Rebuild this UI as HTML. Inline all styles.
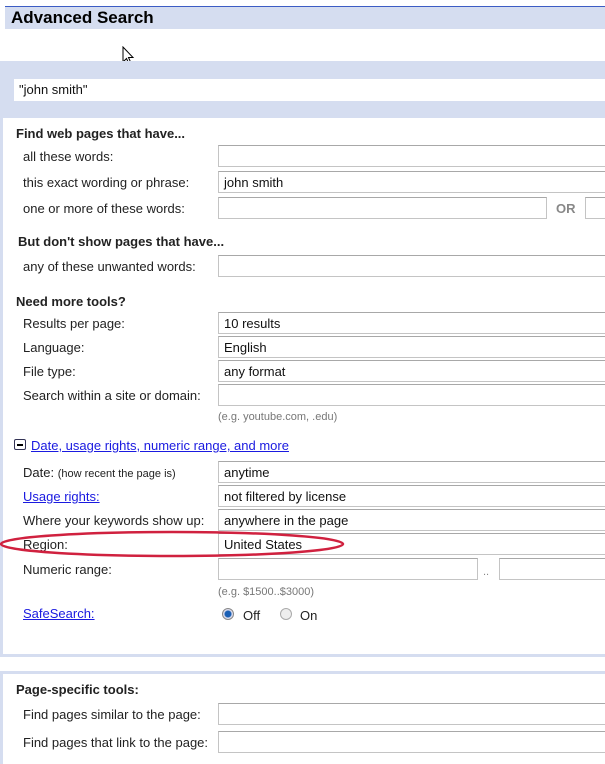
<!DOCTYPE html>
<html><head><style>
body{margin:0;width:605px;height:764px;overflow:hidden;background:#fff;font-family:"Liberation Sans",Arial,sans-serif;font-size:13px;color:#222;position:relative}
div,span{position:absolute}
.b{background:#d5ddf0}
.l{left:23px;white-space:nowrap}
.h{left:16px;font-weight:bold;white-space:nowrap}
.i{left:218px;width:400px;height:20px;border:1px solid #c4c4c4;border-top-color:#a8a8a8;background:#fff;box-sizing:content-box}
.i span{position:absolute;left:5px;top:3px;white-space:nowrap;color:#111}
.a{color:#1a1ae0;text-decoration:underline}
.g{color:#777;font-size:11px}
</style></head><body>
<div style="left:5px;top:6px;width:600px;height:1px;background:#3c5cc4"></div>
<div class="b" style="left:5px;top:7px;width:600px;height:22px"></div>
<div style="left:11px;top:8px;font-size:17px;font-weight:bold;color:#000">Advanced Search</div>
<svg style="position:absolute;left:122px;top:46px" width="14" height="20" viewBox="0 0 14 20"><path d="M1 1 L1 16 L4.5 12.5 L7 18 L9 17 L6.5 11.5 L11 11.5 Z" fill="#fff" stroke="#000" stroke-width="1"/></svg>
<div class="b" style="left:0;top:61px;width:605px;height:58px"></div>
<div class="b" style="left:0;top:61px;width:3px;height:596px"></div>
<div style="left:14px;top:79px;width:591px;height:22px;background:#fff"></div>
<div style="left:19px;top:82px;color:#111">"john smith"</div>
<div style="left:3px;top:118px;width:602px;height:536px;background:#fff"></div>
<div class="h" style="top:126px">Find web pages that have...</div>
<div class="l" style="top:149px">all these words:</div><div class="i" style="top:145px"></div>
<div class="l" style="top:175px">this exact wording or phrase:</div><div class="i" style="top:171px"><span>john smith</span></div>
<div class="l" style="top:201px">one or more of these words:</div><div class="i" style="top:197px;width:327px"></div>
<div style="left:556px;top:201px;color:#888;font-weight:bold">OR</div><div class="i" style="left:585px;top:197px;width:40px"></div>
<div class="h" style="left:18px;top:234px">But don't show pages that have...</div>
<div class="l" style="top:259px">any of these unwanted words:</div><div class="i" style="top:255px"></div>
<div class="h" style="top:294px">Need more tools?</div>
<div class="l" style="top:316px">Results per page:</div><div class="i" style="top:312px"><span>10 results</span></div>
<div class="l" style="top:340px">Language:</div><div class="i" style="top:336px"><span>English</span></div>
<div class="l" style="top:364px">File type:</div><div class="i" style="top:360px"><span>any format</span></div>
<div class="l" style="top:388px">Search within a site or domain:</div><div class="i" style="top:384px"></div>
<div class="g" style="left:218px;top:411px">(e.g. youtube.com, .edu)</div>
<div style="left:14px;top:439px;width:10px;height:9px;border:1px solid #335;border-radius:2px;background:#fff"><span style="left:2px;top:4px;width:6px;height:2px;background:#000"></span></div>
<div class="a" style="left:31px;top:438px">Date, usage rights, numeric range, and more</div>
<div class="l" style="top:465px">Date: <span style="position:static;font-size:11px">(how recent the page is)</span></div><div class="i" style="top:461px"><span>anytime</span></div>
<div class="l a" style="top:489px">Usage rights:</div><div class="i" style="top:485px"><span>not filtered by license</span></div>
<div class="l" style="top:513px">Where your keywords show up:</div><div class="i" style="top:509px"><span>anywhere in the page</span></div>
<div class="l" style="top:537px">Region:</div><div class="i" style="top:533px"><span>United States</span></div>
<div class="l" style="top:562px">Numeric range:</div><div class="i" style="top:558px;width:258px"></div>
<div style="left:483px;top:566px;color:#888;font-size:11px">..</div><div class="i" style="left:499px;top:558px"></div>
<div class="g" style="left:218px;top:586px">(e.g. $1500..$3000)</div>
<div class="l a" style="top:606px">SafeSearch:</div>
<div style="left:222px;top:608px;width:10px;height:10px;border:1px solid #888;border-radius:50%;background:radial-gradient(circle,#1a5fb4 0 3px,#dde 4px)"></div>
<div style="left:243px;top:608px">Off</div>
<div style="left:280px;top:608px;width:10px;height:10px;border:1px solid #aaa;border-radius:50%;background:#eee"></div>
<div style="left:300px;top:608px">On</div>
<svg style="position:absolute;left:0;top:528px" width="350" height="32"><ellipse cx="172" cy="16" rx="171" ry="12" fill="none" stroke="#d0213f" stroke-width="2.5"/></svg>
<div class="b" style="left:0;top:654px;width:605px;height:3px"></div>
<div class="b" style="left:0;top:671px;width:605px;height:3px"></div>
<div class="b" style="left:0;top:671px;width:3px;height:93px"></div>
<div class="h" style="top:682px">Page-specific tools:</div>
<div class="l" style="top:707px">Find pages similar to the page:</div><div class="i" style="top:703px"></div>
<div class="l" style="top:735px">Find pages that link to the page:</div><div class="i" style="top:731px"></div>
</body></html>
